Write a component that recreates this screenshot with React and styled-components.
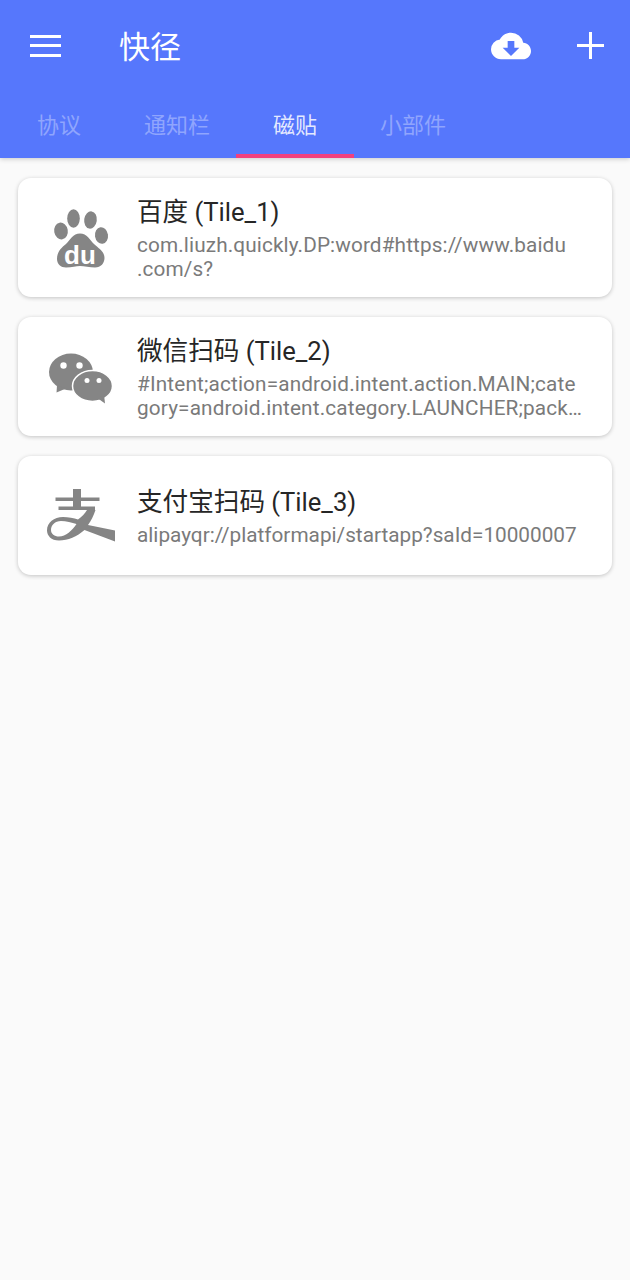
import React from 'react'
import styled, { createGlobalStyle } from 'styled-components'
import { MdCloudDownload } from 'react-icons/md'

const GlobalStyle = createGlobalStyle`
  html, body { margin: 0; padding: 0; background: #fafafa; }
  body { font-family: Roboto, "Noto Sans CJK SC", sans-serif; }
`

const Page = styled.div`
  width: 630px;
  min-height: 1280px;
  background: #fafafa;
`
const Header = styled.header`
  background: #5677fc;
  height: 158px;
  box-shadow: 0 1px 5px rgba(0, 0, 0, 0.2);
  display: flex;
  flex-direction: column;
`
const Toolbar = styled.div`
  height: 94px;
  display: flex;
  align-items: center;
  padding: 0 26px 0 30px;
`
const MenuBars = styled.div`
  width: 31px;
  height: 22px;
  display: flex;
  flex-direction: column;
  justify-content: space-between;
  margin-right: 58px;
  margin-top: -3px;
`
const Bar = styled.span`
  display: block;
  height: 3px;
  background: #fff;
`
const Title = styled.h1`
  flex: 1;
  margin: 0;
  font-size: 31px;
  font-weight: 400;
  color: #fff;
  line-height: 1;
`
const Actions = styled.div`
  display: flex;
  align-items: center;
  gap: 46px;
  margin-top: -3px;
`
const Tabs = styled.nav`
  flex: 1;
  display: flex;
`
const Tab = styled.div`
  width: 118px;
  display: flex;
  align-items: center;
  justify-content: center;
  font-size: 22px;
  padding-bottom: 3px;
  box-sizing: border-box;
  color: ${p => (p.$active ? 'rgba(255,255,255,0.85)' : 'rgba(255,255,255,0.35)')};
  border-bottom: 4px solid ${p => (p.$active ? '#f2407d' : 'transparent')};
`
const List = styled.main`
  display: flex;
  flex-direction: column;
  gap: 20px;
  padding: 20px 18px;
`
const Card = styled.div`
  height: 119px;
  background: #fff;
  border-radius: 13px;
  box-shadow: 0 1px 4px rgba(0, 0, 0, 0.22);
  display: flex;
  align-items: center;
  padding-left: 12px;
  gap: 7px;
`
const Info = styled.div`
  width: 448px;
  display: flex;
  flex-direction: column;
  gap: 6px;
  padding-top: 2px;
`
const CardTitle = styled.div`
  font-size: 25.6px;
  line-height: 30px;
  color: #262626;
`
const CardText = styled.div`
  font-size: 20.75px;
  line-height: 24px;
  color: #7a7a7a;
  word-break: break-all;
  letter-spacing: ${p => p.$tracking || 0}px;
`

const GREY = '#858585'

const PlusIcon = () => (
  <svg width="27" height="27" viewBox="0 0 27 27">
    <path d="M13.5 0V27M0 13.5H27" stroke="#fff" strokeWidth="3" fill="none" />
  </svg>
)

const BaiduIcon = () => (
  <svg width="100" height="100" viewBox="0 0 100 100">
    <g fill={GREY}>
      <ellipse cx="31" cy="43" rx="6.8" ry="8.5" transform="rotate(-10 31 43)" />
      <ellipse cx="43.5" cy="30.5" rx="6.3" ry="9.2" />
      <ellipse cx="60.5" cy="32" rx="6.3" ry="8.7" transform="rotate(8 60.5 32)" />
      <ellipse cx="71.5" cy="47.5" rx="6.5" ry="8.3" transform="rotate(-8 71.5 47.5)" />
      <path d="M50 45.5C43 45.5 40 52 36 56C31 60 27 64 27 71C27 76 31 79.5 36 79.5C42 79.5 46 78 50 78C54 78 60 79.5 65 79.5C71 79.5 74.5 75 74.5 70C74.5 63 68 60 64 56C60 52 57 45.5 50 45.5Z" />
    </g>
    <text x="50" y="75.5" fontSize="26" fontWeight="700" fontFamily="'Liberation Sans', sans-serif" fill="#fff" textAnchor="middle">du</text>
  </svg>
)

const WechatIcon = () => (
  <svg width="100" height="100" viewBox="0 0 100 100">
    <g transform="translate(0 3.5)">
      <ellipse cx="41" cy="41.5" rx="22" ry="18.5" fill={GREY} />
      <path d="M27 55L26.5 62L36 58Z" fill={GREY} />
      <circle cx="33.5" cy="35" r="3.2" fill="#fff" />
      <circle cx="49.5" cy="35" r="3.2" fill="#fff" />
      <ellipse cx="62.5" cy="55.5" rx="20" ry="15.5" fill={GREY} stroke="#fff" strokeWidth="1.5" />
      <path d="M68 68L75 73L74 64Z" fill={GREY} />
      <circle cx="57" cy="50" r="2.5" fill="#fff" />
      <circle cx="69" cy="50" r="2.5" fill="#fff" />
    </g>
  </svg>
)

const AlipayIcon = () => (
  <svg width="100" height="100" viewBox="0 0 100 100">
    <g transform="translate(0 4.5)" fill={GREY}>
      <rect x="25.5" y="27" width="44" height="3.5" />
      <rect x="43" y="18.5" width="8" height="19" />
      <rect x="28.5" y="36" width="36.5" height="3.5" />
      <path
        fillRule="evenodd"
        d="M57 39.5H65.5C63.5 45.5 61 50.5 58 54.5L85 60V71L54.5 59.5C47 66 38 70 29 70C21 70 17 65 17 60C17 52 24 46.5 33 46.5C38 46.5 44 47.5 48 49C52 46 55 43 57 39.5ZM46.5 53.5C42 52 36 50.5 31 50.5C25 50.5 21 54.5 21 59.5C21 63.5 24.5 66 29 66C36 66 42 60 46.5 53.5Z"
      />
    </g>
  </svg>
)

const tabs = ['协议', '通知栏', '磁贴', '小部件']

const App = () => {
  return (
    <Page>
      <GlobalStyle />
      <Header>
        <Toolbar>
          <MenuBars>
            <Bar />
            <Bar />
            <Bar />
          </MenuBars>
          <Title>快径</Title>
          <Actions>
            <MdCloudDownload size={40} color="#fff" />
            <PlusIcon />
          </Actions>
        </Toolbar>
        <Tabs>
          {tabs.map((t, i) => (
            <Tab key={t} $active={i === 2}>{t}</Tab>
          ))}
        </Tabs>
      </Header>
      <List>
        <Card>
          <BaiduIcon />
          <Info>
            <CardTitle>百度 (Tile_1)</CardTitle>
            <CardText $tracking={0.12}>com.liuzh.quickly.DP:word#https://www.baidu<br />.com/s?</CardText>
          </Info>
        </Card>
        <Card>
          <WechatIcon />
          <Info>
            <CardTitle>微信扫码 (Tile_2)</CardTitle>
            <CardText $tracking={0.15}>#Intent;action=android.intent.action.MAIN;cate<br />gory=android.intent.category.LAUNCHER;pack…</CardText>
          </Info>
        </Card>
        <Card>
          <AlipayIcon />
          <Info>
            <CardTitle>支付宝扫码 (Tile_3)</CardTitle>
            <CardText>alipayqr://platformapi/startapp?saId=10000007</CardText>
          </Info>
        </Card>
      </List>
    </Page>
  )
}

export default App
